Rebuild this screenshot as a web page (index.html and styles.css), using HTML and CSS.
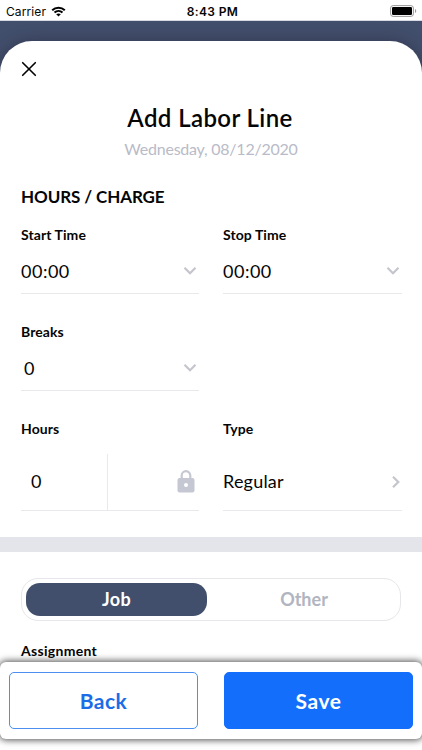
FILE: index.html
```html
<!DOCTYPE html>
<html lang="en">
<head>
<meta charset="utf-8">
<title>Add Labor Line</title>
<link rel="stylesheet" href="styles.css">
</head>
<body>
<div class="status">
  <div class="carrier"><span>Carrier</span>
    <svg class="wifi" viewBox="0 0 15 11"><path d="M1.2 4.2C4.7.8 10.3.8 13.8 4.2M3.5 6.6c2.3-2.1 5.7-2.1 8 0" fill="none" stroke="#000" stroke-width="2"/><path d="M5.2 8.2c1.3-1.1 3.3-1.1 4.6 0L7.5 10.6z"/></svg>
  </div>
  <div class="clock">8:43 PM</div>
  <svg class="battery" viewBox="0 0 27 12"><rect x=".6" y=".6" width="22.8" height="10.8" rx="2.5" fill="none" stroke="#999"/><rect x="2" y="2" width="20" height="8" rx="1.2"/><path d="M25 4v4c1.7-.7 1.7-3.3 0-4z" fill="#999"/></svg>
</div>
<div class="backdrop">
  <main class="sheet">
    <svg class="close" viewBox="0 0 16 16"><path d="M1.7 1.7l12.6 12.6M14.3 1.7L1.7 14.3"/></svg>
    <h1 class="title">Add Labor Line</h1>
    <p class="date">Wednesday, 08/12/2020</p>
    <h2 class="heading">HOURS / CHARGE</h2>
    <div class="fields">
      <div class="field">
        <div class="label">Start Time</div>
        <div class="value"><span class="time">00:00</span><svg class="down" viewBox="0 0 14 10"><path d="M1.5 1.7L7 7.2l5.5-5.5"/></svg></div>
      </div>
      <div class="field">
        <div class="label">Stop Time</div>
        <div class="value"><span class="time">00:00</span><svg class="down" viewBox="0 0 14 10"><path d="M1.5 1.7L7 7.2l5.5-5.5"/></svg></div>
      </div>
      <div class="field breaks">
        <div class="label">Breaks</div>
        <div class="value"><span class="digit">0</span><svg class="down" viewBox="0 0 14 10"><path d="M1.5 1.7L7 7.2l5.5-5.5"/></svg></div>
      </div>
      <div class="field hours">
        <div class="label">Hours</div>
        <div class="value tall"><div class="amount"><span class="digit">0</span></div>
          <svg class="lock" viewBox="0 0 18 23"><path d="M4.7 9V5.5a4.3 4.3 0 0 1 8.6 0V9" fill="none" stroke="#c5c8d2" stroke-width="2.2"/><rect x=".5" y="8" width="17" height="14.5" rx="2" fill="#c5c8d2"/><circle cx="9" cy="15" r="2" fill="#fff"/></svg>
        </div>
      </div>
      <div class="field">
        <div class="label">Type</div>
        <div class="value tall"><span class="regular">Regular</span><svg class="right" viewBox="0 0 10 14"><path d="M2 1.7L7.3 7 2 12.3"/></svg></div>
      </div>
    </div>
    <div class="divider"></div>
    <div class="segment"><div class="tab active">Job</div><div class="tab">Other</div></div>
    <div class="label assignment">Assignment</div>
  </main>
</div>
<footer class="actions">
  <button class="btn back">Back</button>
  <button class="btn save">Save</button>
</footer>
</body>
</html>
```
FILE: styles.css
```css
* { box-sizing: border-box; }
body { margin: 0; width: 422px; height: 750px; overflow: hidden; position: relative; background: #fff; color: #050505; font-family: Lato, sans-serif; }
svg { display: block; flex: none; }
h1, h2, p { margin: 0; }
.status { height: 21px; padding: 0 5px 0 6px; display: grid; grid-template-columns: 1fr auto 1fr; align-items: center; font: 12px/21px Inter, sans-serif; border-bottom: 1px solid #d5dae3; }
.carrier { display: flex; align-items: center; gap: 5px; letter-spacing: .1px; padding-top: 1px; }
.wifi { width: 15px; height: 11px; }
.clock { font-weight: 600; letter-spacing: .35px; padding: 1px 0 0 2px; }
.battery { width: 27px; height: 12px; justify-self: end; }
.backdrop { height: 729px; padding-top: 20px; background: #424f6c; }
.sheet { height: 709px; padding-top: 20px; border-radius: 32px 32px 0 0; background: #fff; box-shadow: 0 0 16px rgba(35, 30, 50, .45); }
.close { width: 16px; height: 16px; margin-left: 21px; fill: none; stroke: #000; stroke-width: 1.6; stroke-linecap: round; }
.title { margin-top: 26px; height: 30px; line-height: 30px; text-align: center; font-size: 24px; font-weight: 600; letter-spacing: .4px; padding-right: 2px; }
.date { margin-top: 6px; height: 20px; line-height: 20px; text-align: center; font-size: 16px; letter-spacing: -.23px; color: #b9bbc8; }
.heading { margin: 28px 0 0 21px; height: 20px; line-height: 20px; font-size: 17px; font-weight: 700; letter-spacing: -.1px; }
.fields { display: grid; grid-template-columns: 178px 179px; column-gap: 24px; margin: 18px 0 0 21px; }
.field { height: 97px; }
.breaks { grid-column: 1 / 3; width: 178px; }
.hours { height: 112px; }
.label { height: 20px; line-height: 20px; font-size: 14px; font-weight: 700; letter-spacing: .08px; }
.value { height: 49px; padding: 3px 2px 0 0; display: flex; align-items: center; justify-content: space-between; border-bottom: 1px solid #e9e9ec; font-size: 18px; }
.time { letter-spacing: .5px; }
.regular { letter-spacing: .2px; padding-bottom: 2px; }
.breaks .digit { margin-left: 3px; }
.down { width: 14px; height: 10px; }
.right { width: 10px; height: 14px; margin-right: -1px; }
.down, .right { fill: none; stroke: #c5c5ce; stroke-width: 2.2; }
.value.tall { height: 57px; margin-top: 15px; padding-top: 0; }
.amount { width: 87px; height: 56px; line-height: 54px; padding-left: 10px; border-right: 1px solid #e9e9ec; }
.lock { width: 18px; height: 23px; margin: 0 2px 2px 0; }
.divider { height: 15px; margin-top: 6px; background: #e4e4eb; }
.segment { height: 43px; margin: 26px 21px 0; padding: 4px; display: flex; border: 1px solid #e6e6eb; border-radius: 17px; }
.tab { width: 181px; line-height: 32px; text-align: center; font-size: 18px; font-weight: 700; color: #b1b4c1; }
.tab + .tab { flex: 1; padding-left: 5px; }
.tab.active { height: 33px; border-radius: 14px; background: #424f6c; color: #fff; letter-spacing: .3px; }
.assignment { margin: 20px 0 0 21px; letter-spacing: .3px; }
.actions { position: absolute; left: 0; right: 0; top: 662px; height: 77px; padding: 10px 9px; display: flex; justify-content: space-between; border-radius: 6px; background: #fff; box-shadow: 0 0 7px 1px rgba(0, 0, 0, .7); }
.btn { width: 189px; height: 57px; padding: 0; border: 1px solid #4c8ff0; border-radius: 5px; background: #fff; color: #1b6ce6; font: 700 21px/54px Lato, sans-serif; letter-spacing: .5px; }
.save { border-color: #136ffb; background: #136ffb; color: #fff; }
```
